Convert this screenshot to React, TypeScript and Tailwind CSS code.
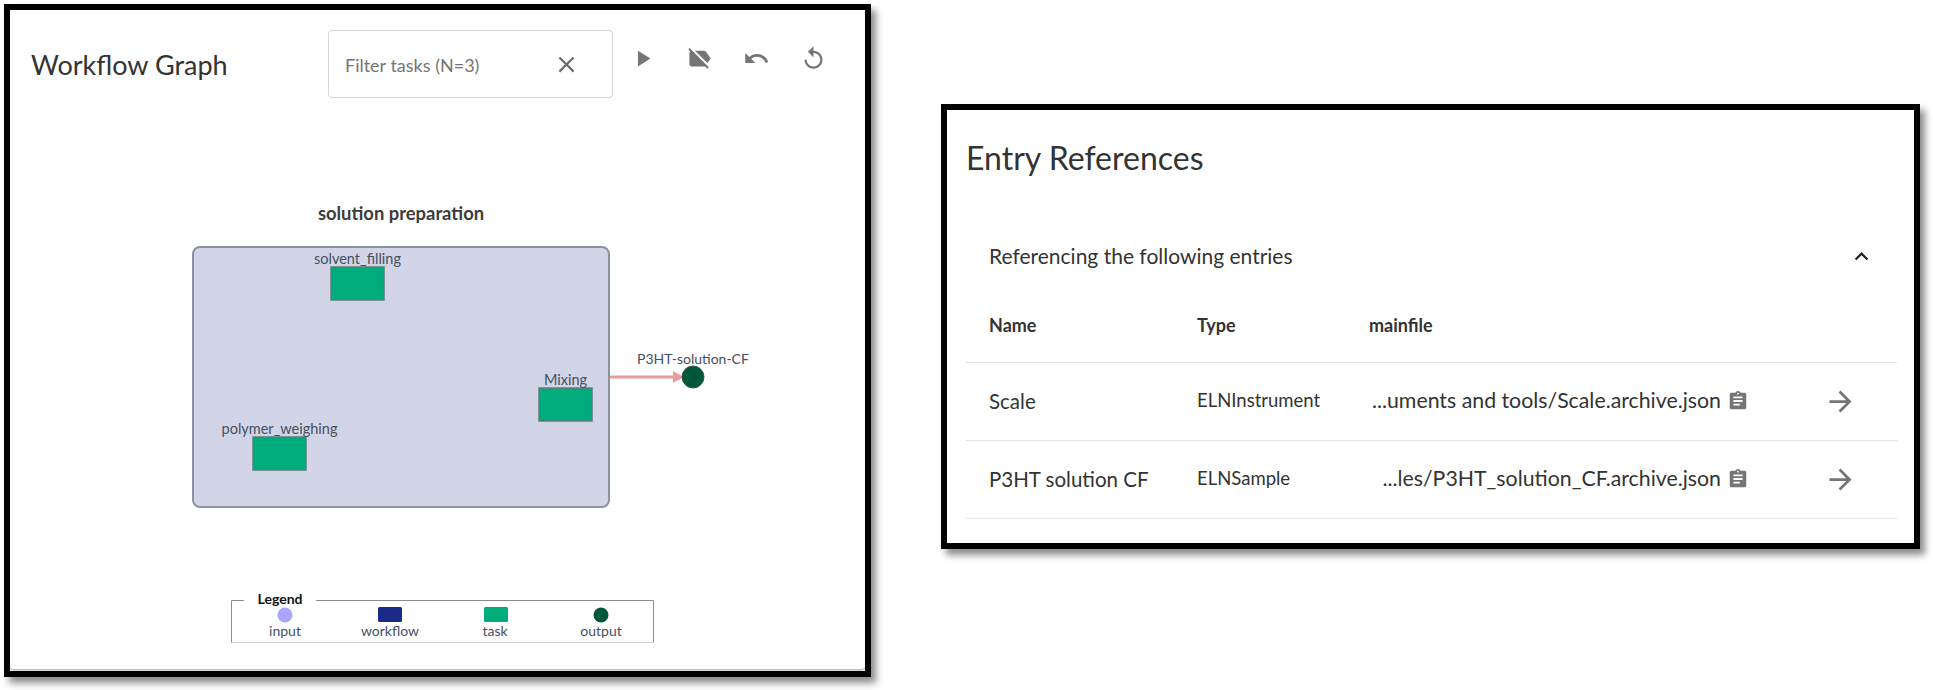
import React from 'react';

const FONT = "font-['Lato','Noto_Sans',sans-serif]";

const paths = {
  play: 'M8 5v14l11-7z',
  labelOff: 'M3.25 2.75l17 17L19 21l-2-2H5c-1.1 0-2-.9-2-2V7c0-.55.23-1.05.59-1.41L2 4l1.25-1.25zM22 12l-4.37-6.16C17.27 5.33 16.67 5 16 5H8l11 11 3-4z',
  undo: 'M12.5 8c-2.65 0-5.05.99-6.9 2.6L2 7v9h9l-3.62-3.62c1.39-1.16 3.16-1.88 5.12-1.88 3.54 0 6.55 2.31 7.6 5.5l2.37-.78C21.08 11.03 17.15 8 12.5 8z',
  replay: 'M12 5V1L7 6l5 5V7c3.31 0 6 2.69 6 6s-2.69 6-6 6-6-2.69-6-6H4c0 4.42 3.58 8 8 8s8-3.58 8-8-3.58-8-8-8z',
  clear: 'M19 6.41L17.59 5 12 10.59 6.41 5 5 6.41 10.59 12 5 17.59 6.41 19 12 13.41 17.59 19 19 17.59 13.41 12z',
  assignment: 'M19 3h-4.18C14.4 1.84 13.3 1 12 1c-1.3 0-2.4.84-2.82 2H5c-1.1 0-2 .9-2 2v14c0 1.1.9 2 2 2h14c1.1 0 2-.9 2-2V5c0-1.1-.9-2-2-2zm-7 0c.55 0 1 .45 1 1s-.45 1-1 1-1-.45-1-1 .45-1 1-1zm2 14H7v-2h7v2zm3-4H7v-2h10v2zm0-4H7V7h10v2z',
  arrow: 'M12 4l-1.41 1.41L16.17 11H4v2h12.17l-5.58 5.59L12 20l8-8z',
  less: 'M12 8l-6 6 1.41 1.41L12 10.83l4.59 4.58L18 14z',
};

const Icon = ({ d, className }: { d: string; className: string }) => (
  <svg viewBox="0 0 24 24" fill="currentColor" className={className}>
    <path d={d} />
  </svg>
);

const tasks = [
  { name: 'solvent_filling', x: 331, y: 267 },
  { name: 'Mixing', x: 539, y: 388 },
  { name: 'polymer_weighing', x: 253, y: 437 },
];

const WorkflowGraph = () => (
  <svg viewBox="10 97 855 570" className="block h-[570px] w-[855px]">
    <text x="401" y="220" textAnchor="middle" fontSize="18.4" fontWeight="700" fill="#3c3c3c">solution preparation</text>
    <rect x="193" y="247" width="416" height="260" rx="7" fill="#d2d5e8" stroke="#8a93a3" strokeWidth="2" />
    {tasks.map((task) => (
      <g key={task.name}>
        <rect x={task.x} y={task.y} width="53" height="33" fill="#00ab7c" stroke="#5d7d78" strokeWidth="1.5" />
        <text x={task.x + 26.5} y={task.y - 3} textAnchor="middle" fontSize="14.5" fill="#46505f">{task.name}</text>
      </g>
    ))}
    <line x1="610" y1="377" x2="676" y2="377" stroke="#e89c9c" strokeWidth="3" />
    <polygon points="673,371 684,377 673,383" fill="#e89c9c" />
    <circle cx="693" cy="377" r="11" fill="#01573a" stroke="#3d5a55" strokeWidth="1" />
    <text x="693" y="364" textAnchor="middle" fontSize="14" fill="#46505f">P3HT-solution-CF</text>

    {/* legend */}
    <path d="M244 600.5H231.5V642.5M653.5 642.5V600.5H316" fill="none" stroke="#8c8c8c" strokeWidth="1" />
    <line x1="232" y1="642.5" x2="653" y2="642.5" stroke="#cfcfcf" strokeWidth="1" />
    <text x="280" y="604" textAnchor="middle" fontSize="14" fontWeight="700" fill="#111111">Legend</text>
    <circle cx="285" cy="615" r="7.5" fill="#aaa6ff" />
    <rect x="378" y="607" width="24" height="15" rx="1.5" fill="#1a2b87" />
    <rect x="484" y="607" width="24" height="15" rx="1.5" fill="#00ab7c" />
    <circle cx="601" cy="615" r="7.5" fill="#01573a" />
    <text x="285" y="636" textAnchor="middle" fontSize="14" fill="#46505f">input</text>
    <text x="390" y="636" textAnchor="middle" fontSize="14" fill="#46505f">workflow</text>
    <text x="495" y="636" textAnchor="middle" fontSize="14" fill="#46505f">task</text>
    <text x="601" y="636" textAnchor="middle" fontSize="14" fill="#46505f">output</text>
  </svg>
);

const rows = [
  { name: 'Scale', type: 'ELNInstrument', file: '...uments and tools/Scale.archive.json' },
  { name: 'P3HT solution CF', type: 'ELNSample', file: '...les/P3HT_solution_CF.archive.json' },
];

export default function App() {
  return (
    <div className={`${FONT} flex h-[690px] w-[1933px] items-start bg-white pl-[4px] pt-[4px] text-[#333333]`}>
      {/* Workflow graph card */}
      <div className="h-[673px] w-[867px] shrink-0 border-[6px] border-black shadow-[5px_6px_7px_rgba(0,0,0,0.45)]">
        <div className="h-[659px] rounded-b shadow-[0_1px_3px_rgba(0,0,0,0.4)]">
          <div className="flex h-[87px] items-start pt-[20px]">
            <div className="w-[318px] pl-[21px] pt-[18px] text-[27px] leading-[34px]">Workflow Graph</div>
            <div className="flex h-[68px] w-[285px] items-center justify-between rounded border border-[#d6d6d6] pl-[16px] pr-[32px]">
              <span className="pt-[3px] text-[18px] text-[#757575]">Filter tasks (N=3)</span>
              <Icon d={paths.clear} className="h-[27px] w-[27px] text-[#6b6b6b]" />
            </div>
            <div className="ml-[1px] flex text-[#757575]">
              {[paths.play, paths.labelOff, paths.undo, paths.replay].map((d) => (
                <div key={d} className="flex h-[57px] w-[57px] items-center justify-center">
                  <Icon d={d} className="h-[27px] w-[27px]" />
                </div>
              ))}
            </div>
          </div>
          <WorkflowGraph />
        </div>
      </div>

      {/* Entry references card */}
      <div className="ml-[70px] mt-[100px] h-[445px] w-[979px] shrink-0 border-[6px] border-black pl-[19px] pr-[17px] shadow-[5px_6px_7px_rgba(0,0,0,0.45)]">
        <div className="pt-[30px] text-[32px] leading-[36px]">Entry References</div>
        <div className="mt-[62px] flex h-[36px] items-center justify-between pl-[23px] pr-[22px]">
          <span className="text-[21px]">Referencing the following entries</span>
          <Icon d={paths.less} className="h-[27px] w-[27px] text-[#222222]" />
        </div>
        <div className="mt-[19px]">
          <div className="grid h-[70px] grid-cols-[208px_172px_1fr] items-center border-b border-[#e3e3e3] pb-[5px] pl-[23px] text-[18px] font-bold">
            <div>Name</div>
            <div>Type</div>
            <div>mainfile</div>
          </div>
          {rows.map((row) => (
            <div key={row.name} className="grid h-[78px] grid-cols-[208px_172px_352px_1fr] items-center border-b border-[#e3e3e3] pb-[1px] pl-[23px]">
              <div className="text-[20.5px]">{row.name}</div>
              <div className="text-[18.5px]">{row.type}</div>
              <div className="flex items-center justify-end whitespace-nowrap text-[21.3px]">{row.file}</div>
              <div className="flex items-center pl-[6px] text-[#757575]">
                <Icon d={paths.assignment} className="h-[22px] w-[22px]" />
                <Icon d={paths.arrow} className="ml-[75px] h-[33px] w-[33px]" />
              </div>
            </div>
          ))}
        </div>
      </div>
    </div>
  );
}
